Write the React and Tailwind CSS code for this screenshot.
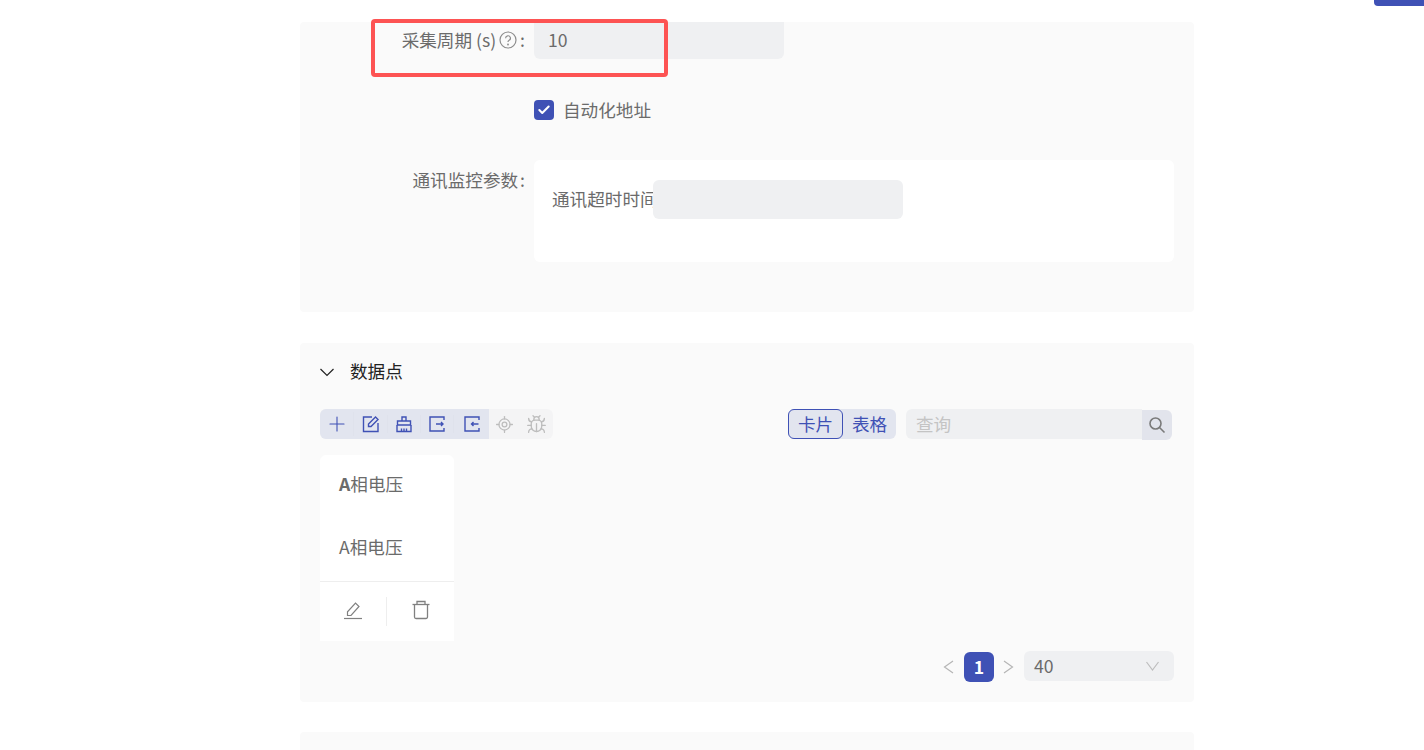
import { Plus, LocateFixed, Bug, Check } from 'lucide-react'

function ExportIcon({ flip }) {
  return (
    <svg width="18" height="18" viewBox="0 0 18 18" fill="none" stroke="currentColor" strokeWidth="1.4">
      <path d="M16 5V2H2v14h14v-3" />
      {flip ? <path d="M15.500 9H8.500M10.500 7 8.500 9l2 2" /> : <path d="M8 9h7M13 7l2 2-2 2" />}
    </svg>
  )
}

function BroomIcon() {
  return (
    <svg width="18" height="18" viewBox="0 0 18 18" fill="none" stroke="currentColor" strokeWidth="1.4">
      <path d="M7 6V2h4v4" />
      <path d="M2.500 6h13v4h-13z" />
      <path d="M2 10v6.500h14V10" />
      <path d="M6.500 16.500V13.500M9 16.500V13.500M11.500 16.500V13.500" />
    </svg>
  )
}

function EditIcon() {
  return (
    <svg width="18" height="18" viewBox="0 0 18 18" fill="none" stroke="currentColor" strokeWidth="1.4">
      <path d="M10 2H1.500v14.500H16V8" />
      <path d="M6.500 11.500V9l7-7 2.500 2.500-7 7z" />
    </svg>
  )
}

function SearchIcon() {
  return (
    <svg width="18" height="18" viewBox="0 0 18 18" fill="none" stroke="currentColor" strokeWidth="1.6">
      <circle cx="7.500" cy="7.500" r="5.500" />
      <path d="M11.500 11.500 16.500 16.500" />
    </svg>
  )
}

function Caret({ d, w, h, className }) {
  return (
    <svg width={w} height={h} viewBox={`0 0 ${w} ${h}`} fill="none" stroke="currentColor" strokeWidth="1.200" className={className}>
      <path d={d} />
    </svg>
  )
}

function TrashIcon() {
  return (
    <svg width="18" height="20" viewBox="0 0 18 20" fill="none" stroke="currentColor" strokeWidth="1.300">
      <path d="M0.500 4.500h17" />
      <path d="M5 4.500V1.500h8v3" />
      <path d="M2.500 4.500V17a1.500 1.500 0 0 0 1.500 1.500h10a1.500 1.500 0 0 0 1.500-1.500V4.500" />
    </svg>
  )
}

export default function App() {
  return (
    <main className="relative h-[750px] overflow-hidden bg-white text-[17.6px] leading-6 text-[#6b6b6b] font-['Noto_Sans_CJK_SC','Liberation_Sans',sans-serif]">
      {/* 顶部按钮 */}
      <div className="absolute right-0 top-0 h-[6px] w-[50px] rounded-bl bg-[#3f51b5]" />

      {/* 红色标注框 */}
      <div className="absolute left-[371px] top-[19px] z-10 h-[58px] w-[297px] rounded-sm border-[4px] border-[#fd5353]" />

      <div className="ml-[300px] flex w-[894px] flex-col gap-[31px] pt-[22px]">
        {/* 基本参数 */}
        <section className="h-[290px] rounded bg-[#fafafa]">
          <div className="flex h-[37px]">
            <div className="flex w-[234px] items-center justify-end pb-[2px] pr-[9px]">
              <span className="whitespace-nowrap">采集周期 (s)</span>
              <svg className="ml-[3px] mr-[3px]" width="18" height="18" viewBox="0 0 18 18" fill="none" stroke="#8c8c8c" strokeWidth="1.200">
                <circle cx="9" cy="9" r="8" />
                <path d="M6.600 7.200a2.400 2.400 0 1 1 3.500 2.100c-.8.400-1.100.9-1.100 1.800" />
                <circle cx="9" cy="13.500" r=".4" />
              </svg>
              <span>:</span>
            </div>
            <div className="flex w-[250px] items-center rounded-b-md bg-[#eff0f2] pb-[2px] pl-[14px]">10</div>
          </div>

          <div className="ml-[234px] mt-[41px] flex h-[20px] items-center gap-[9px]">
            <span className="flex h-[20px] w-[20px] items-center justify-center rounded bg-[#3f51b5]">
              <Check size={14} strokeWidth={3.500} className="text-white" />
            </span>
            <span>自动化地址</span>
          </div>

          <div className="mt-[40px] flex">
            <div className="flex w-[234px] justify-end whitespace-nowrap pr-[9px] pt-[8px]">
              通讯监控参数<span className="ml-[2px]">:</span>
            </div>
            <div className="flex h-[102px] w-[640px] rounded-md bg-white pl-[18px] pt-[20px]">
              <span className="mt-[7px] w-[101px] whitespace-nowrap">通讯超时时间</span>
              <div className="relative h-[39px] w-[250px] rounded-md bg-[#eff0f2]" />
            </div>
          </div>
        </section>

        {/* 数据点 */}
        <section className="h-[359px] rounded bg-[#fafafa] px-[20px]">
          <div className="flex h-[56px] items-center text-[#222]">
            <Caret w={14} h={9} d="M0.500 1 7 7.500 13.500 1" className="mt-[3px]" />
            <span className="ml-[16px]">数据点</span>
          </div>

          <div className="mt-[10px] flex h-[30px] items-center justify-between pr-[2px]">
            <div className="flex h-[30px] items-center overflow-hidden rounded-md bg-[#f4f4f5]">
              <div className="flex h-[30px] items-center bg-[#e2e5ef] text-[#3f51b5]">
                <span className="flex w-[34px] justify-center border-r border-[#dfe2ec]"><Plus size={24} strokeWidth={1.100} /></span>
                <span className="flex w-[34px] justify-center border-r border-[#dfe2ec]"><EditIcon /></span>
                <span className="flex w-[33px] justify-center border-r border-[#dfe2ec]"><BroomIcon /></span>
                <span className="flex w-[33px] justify-center border-r border-[#dfe2ec]"><ExportIcon /></span>
                <span className="flex w-[35px] justify-center"><ExportIcon flip /></span>
              </div>
              <span className="flex w-[31px] justify-center text-[#bdbdbd]"><LocateFixed size={19} strokeWidth={1.600} /></span>
              <span className="flex w-[33px] justify-center text-[#bdbdbd]"><Bug size={21} strokeWidth={1.500} /></span>
            </div>

            <div className="flex items-center">
              <div className="flex h-[30px] items-center rounded-md bg-[#e2e5ef] text-[#3f51b5]">
                <span className="flex h-[30px] w-[55px] items-center justify-center rounded-md border border-[#3f51b5]">卡片</span>
                <span className="flex w-[53px] justify-center">表格</span>
              </div>
              <div className="ml-[10px] flex h-[30px] w-[266px] items-start">
                <div className="flex h-[30px] flex-1 items-center rounded-l-md bg-[#eff0f2] pl-[10px] text-[#c4c4c4]">查询</div>
                <span className="mt-px flex h-[30px] w-[30px] items-center justify-center rounded-r-md bg-[#e2e4ec] text-[#7a7a7a]">
                  <SearchIcon />
                </span>
              </div>
            </div>
          </div>

          {/* 卡片 */}
          <div className="mt-[16px] h-[186px] w-[134px] rounded-t-md bg-white">
            <div className="h-[126px] pl-[19px] pt-[17px]">
              <div><span className="font-semibold">A</span>相电压</div>
              <div className="mt-[39px]">A相电压</div>
            </div>
            <div className="flex h-[60px] items-start border-t border-[#eeeeee] text-[#808080]">
              <span className="mt-[15px] flex h-[29px] w-[67px] items-center justify-center border-r border-[#eeeeee]">
                <svg className="-mt-[4px]" width="20" height="20" viewBox="0 0 20 20" fill="none" stroke="currentColor" strokeWidth="1.200">
                  <path d="M1 18.500h18" />
                  <path d="M4.500 15.500v-3.700L12.500 3l3.500 3.500-8 9z" />
                </svg>
              </span>
              <span className="mt-[18px] flex flex-1 justify-center"><TrashIcon /></span>
            </div>
          </div>

          {/* 分页 */}
          <div className="mt-[10px] flex h-[31px] items-center justify-end">
            <Caret w={11} h={14} d="M10 1 1.500 7 10 13" className="text-[#b5b5b5]" />
            <span className="ml-[10px] flex h-[30px] w-[30px] items-center justify-center self-end rounded-md bg-[#3f51b5] font-bold text-white">1</span>
            <Caret w={11} h={14} d="M1 1 9.500 7 1 13" className="ml-[9px] text-[#b5b5b5]" />
            <div className="ml-[10px] flex h-[30px] w-[150px] items-center justify-between self-start rounded-md bg-[#eff0f2] pl-[10px] pr-[15px]">
              <span>40</span>
              <Caret w={13} h={10} d="M0.500 1 6.500 9 12.500 1" className="text-[#bdbdbd]" />
            </div>
          </div>
        </section>

        {/* 下一个面板 */}
        <section className="-mt-px h-[60px] rounded bg-[#fafafa]" />
      </div>
    </main>
  )
}
